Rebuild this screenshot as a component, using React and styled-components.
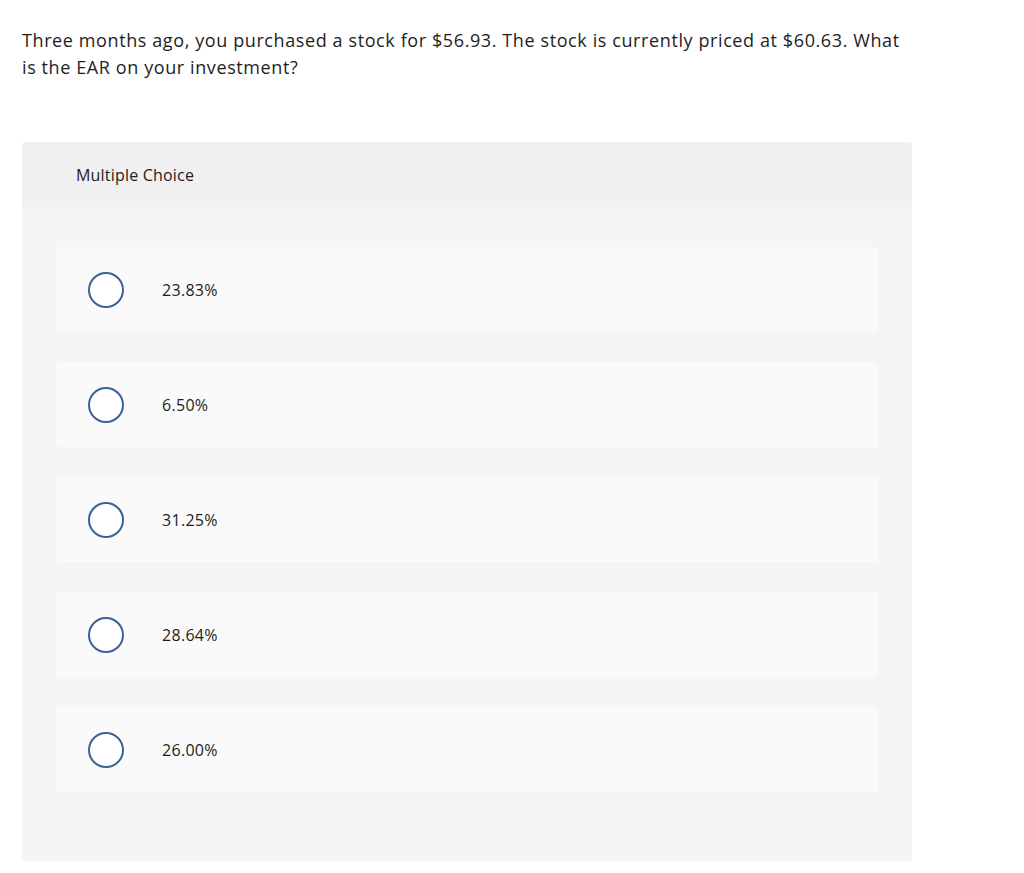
import React from 'react'
import styled, { createGlobalStyle } from "styled-components"

const Global = createGlobalStyle`
body {
    margin: 0;
    background: #ffffff;
    font-family: "Open Sans", "Lato", sans-serif;
    color: #222222;
}
`

const Page = styled.div`
padding: 27px 0 0 22px;
`

const Question = styled.p`
margin: 0;
width: 890px;
font-size: 18px;
line-height: 27px;
letter-spacing: 0.6px;
color: #1e1e1e;
`

const Panel = styled.div`
width: 890px;
margin-top: 61px;
background-color: #f5f5f5;
border-radius: 4px;
overflow: hidden;
`

const PanelHead = styled.div`
height: 65px;
display: flex;
align-items: center;
padding-left: 54px;
background-color: #f0f0f0;
font-size: 16px;
letter-spacing: 0.2px;
color: #222222;
`

const Choices = styled.div`
display: flex;
flex-direction: column;
row-gap: 30px;
padding: 40px 34px 69px 34px;
`

const Choice = styled.label`
height: 85px;
display: flex;
align-items: center;
padding-left: 32px;
background-color: #fafafa;
border-radius: 4px;
font-size: 16px;
letter-spacing: 0.3px;
color: #1e1e1e;
cursor: pointer;
`

const Radio = styled.span`
width: 32px;
height: 32px;
border: 2px solid #3b6295;
border-radius: 50%;
background: #ffffff;
flex-shrink: 0;
margin-right: 38px;
`

const answers = ["23.83%", "6.50%", "31.25%", "28.64%", "26.00%"]

function App() {
    return (
        <>
            <Global />
            <Page>
                <Question>
                    Three months ago, you purchased a stock for $56.93. The stock is currently priced at $60.63. What is the EAR on your investment?
                </Question>
                <Panel>
                    <PanelHead>Multiple Choice</PanelHead>
                    <Choices>
                        {answers.map((a) => (
                            <Choice key={a}>
                                <Radio />
                                {a}
                            </Choice>
                        ))}
                    </Choices>
                </Panel>
            </Page>
        </>
    )
}
export default App;
